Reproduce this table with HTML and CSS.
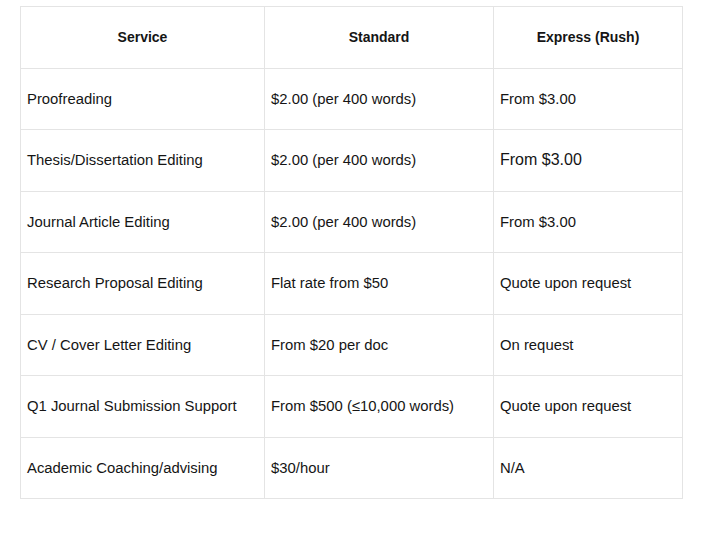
FILE: index.html
```html
<!DOCTYPE html>
<html>
<head>
<meta charset="utf-8">
<link rel="stylesheet" href="styles.css">
</head>
<body>
<table class="pricing">
  <colgroup>
    <col class="c1"><col class="c2"><col class="c3">
  </colgroup>
  <thead>
    <tr><th>Service</th><th>Standard</th><th>Express (Rush)</th></tr>
  </thead>
  <tbody>
    <tr><td>Proofreading</td><td>$2.00 (per 400 words)</td><td>From $3.00</td></tr>
    <tr><td>Thesis/Dissertation Editing</td><td>$2.00 (per 400 words)</td><td class="big">From $3.00</td></tr>
    <tr><td>Journal Article Editing</td><td>$2.00 (per 400 words)</td><td>From $3.00</td></tr>
    <tr><td>Research Proposal Editing</td><td>Flat rate from $50</td><td>Quote upon request</td></tr>
    <tr><td>CV / Cover Letter Editing</td><td>From $20 per doc</td><td>On request</td></tr>
    <tr><td>Q1 Journal Submission Support</td><td>From $500 (≤10,000 words)</td><td>Quote upon request</td></tr>
    <tr><td>Academic Coaching/advising</td><td>$30/hour</td><td>N/A</td></tr>
  </tbody>
</table>
</body>
</html>
```

FILE: styles.css
```css
html, body {
  margin: 0;
  padding: 0;
  background: #ffffff;
}
body {
  padding: 6px 0 0 20px;
  font-family: "Liberation Sans", Arial, sans-serif;
  color: #151515;
}
.pricing {
  border-collapse: collapse;
  table-layout: fixed;
  width: 662px;
}
.c1 { width: 244px; }
.c2 { width: 229px; }
.c3 { width: 189px; }
.pricing th,
.pricing td {
  border: 1px solid #e4e4e4;
  height: 61.5px;
  padding: 0 6px;
  vertical-align: middle;
  box-sizing: border-box;
}
.pricing th {
  font-size: 14px;
  font-weight: bold;
  text-align: center;
}
.pricing td {
  font-size: 14.85px;
  text-align: left;
}
.pricing td.big {
  font-size: 16px;
}
```
